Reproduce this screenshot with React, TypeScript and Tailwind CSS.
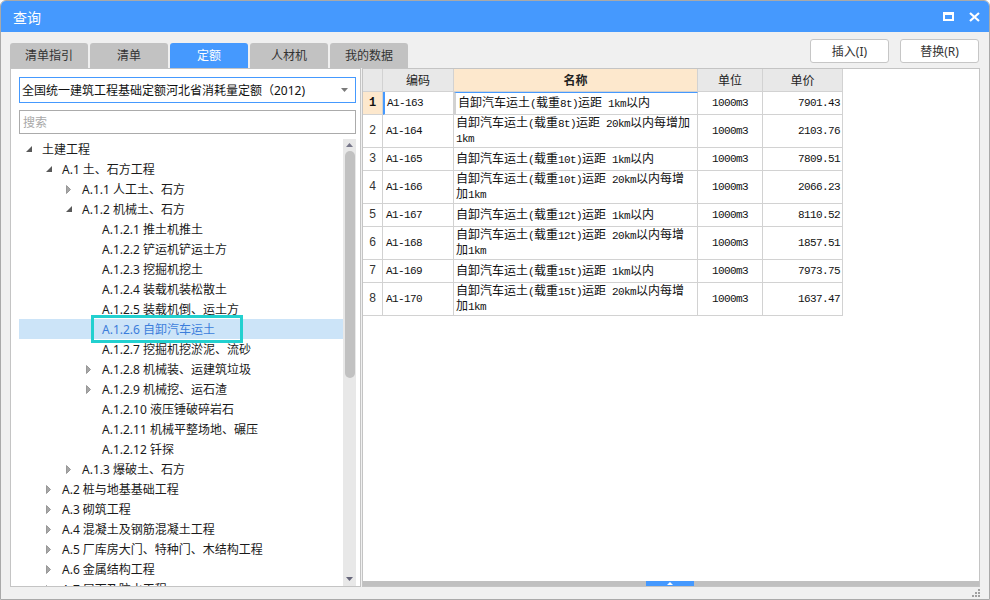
import React from "react";

type Node = { lvl: number; label: string; icon: "open" | "closed" | null; selected?: boolean };

const tree: Node[] = [
  { lvl: 0, label: "土建工程", icon: "open" },
  { lvl: 1, label: "A.1 土、石方工程", icon: "open" },
  { lvl: 2, label: "A.1.1 人工土、石方", icon: "closed" },
  { lvl: 2, label: "A.1.2 机械土、石方", icon: "open" },
  { lvl: 3, label: "A.1.2.1 推土机推土", icon: null },
  { lvl: 3, label: "A.1.2.2 铲运机铲运土方", icon: null },
  { lvl: 3, label: "A.1.2.3 挖掘机挖土", icon: null },
  { lvl: 3, label: "A.1.2.4 装载机装松散土", icon: null },
  { lvl: 3, label: "A.1.2.5 装载机倒、运土方", icon: null },
  { lvl: 3, label: "A.1.2.6 自卸汽车运土", icon: null, selected: true },
  { lvl: 3, label: "A.1.2.7 挖掘机挖淤泥、流砂", icon: null },
  { lvl: 3, label: "A.1.2.8 机械装、运建筑垃圾", icon: "closed" },
  { lvl: 3, label: "A.1.2.9 机械挖、运石渣", icon: "closed" },
  { lvl: 3, label: "A.1.2.10 液压锤破碎岩石", icon: null },
  { lvl: 3, label: "A.1.2.11 机械平整场地、碾压", icon: null },
  { lvl: 3, label: "A.1.2.12 钎探", icon: null },
  { lvl: 2, label: "A.1.3 爆破土、石方", icon: "closed" },
  { lvl: 1, label: "A.2 桩与地基基础工程", icon: "closed" },
  { lvl: 1, label: "A.3 砌筑工程", icon: "closed" },
  { lvl: 1, label: "A.4 混凝土及钢筋混凝土工程", icon: "closed" },
  { lvl: 1, label: "A.5 厂库房大门、特种门、木结构工程", icon: "closed" },
  { lvl: 1, label: "A.6 金属结构工程", icon: "closed" },
  { lvl: 1, label: "A.7 屋面及防水工程", icon: "closed" },
];

// indentation per tree level
const indent = ["pl-[5px]", "pl-[25px]", "pl-[45px]", "pl-[65px]"];

const rows = [
  { code: "A1-163", name: ["自卸汽车运土(载重8t)运距 1km以内"], price: "7901.43" },
  { code: "A1-164", name: ["自卸汽车运土(载重8t)运距 20km以内每增加", "1km"], price: "2103.76" },
  { code: "A1-165", name: ["自卸汽车运土(载重10t)运距 1km以内"], price: "7809.51" },
  { code: "A1-166", name: ["自卸汽车运土(载重10t)运距 20km以内每增", "加1km"], price: "2066.23" },
  { code: "A1-167", name: ["自卸汽车运土(载重12t)运距 1km以内"], price: "8110.52" },
  { code: "A1-168", name: ["自卸汽车运土(载重12t)运距 20km以内每增", "加1km"], price: "1857.51" },
  { code: "A1-169", name: ["自卸汽车运土(载重15t)运距 1km以内"], price: "7973.75" },
  { code: "A1-170", name: ["自卸汽车运土(载重15t)运距 20km以内每增", "加1km"], price: "1637.47" },
];

const tabs = ["清单指引", "清单", "定额", "人材机", "我的数据"];

// SimSun-like: ascii runs squeezed to a 6px advance, CJK at 12px
function Mixed({ text }: { text: string }) {
  const parts = text.match(/[\x00-\x7f]+|[^\x00-\x7f]+/g) || [];
  return (
    <>
      {parts.map((p, i) =>
        /^[\x00-\x7f]/.test(p) ? (
          <span key={i} className="font-['Liberation_Mono',monospace] text-[11px] tracking-[-0.6px]">
            {p}
          </span>
        ) : (
          <span key={i}>{p}</span>
        )
      )}
    </>
  );
}

function Arrow({ kind }: { kind: "open" | "closed" | null }) {
  if (kind === "open")
    return (
      <svg width="6" height="6" viewBox="0 0 6 6">
        <polygon points="6,0 6,6 0,6" fill="#595959" />
      </svg>
    );
  if (kind === "closed")
    return (
      <svg width="5" height="9" viewBox="0 0 5 9">
        <polygon points="0.5,0.5 4.5,4.5 0.5,8.5" fill="#a6a6a6" stroke="#8a8a8a" strokeWidth="0.8" />
      </svg>
    );
  return null;
}

export default function App() {
  return (
    <div className="w-[990px] h-[600px] flex flex-col bg-[#f0f0f0] border border-[#a9a9a9] rounded-t-[6px] overflow-hidden font-['Noto_Sans','Noto_Sans_CJK_SC',sans-serif] text-[#222]">
      {/* Title bar */}
      <div className="h-[31px] shrink-0 bg-[#4599fe] flex items-center justify-between pl-[12px] pr-[9px]">
        <span className="text-white text-[14px] pt-[1px]">查询</span>
        <div className="flex items-center gap-[15px]">
          <svg width="11" height="9" viewBox="0 0 11 9">
            <rect x="1" y="1" width="9" height="7" fill="none" stroke="#fff" strokeWidth="2" />
            <rect x="0" y="0" width="11" height="3" fill="#fff" />
          </svg>
          <svg width="11" height="10" viewBox="0 0 11 10">
            <path d="M1 1 L10 9 M10 1 L1 9" stroke="#fff" strokeWidth="2.2" />
          </svg>
        </div>
      </div>

      <div className="flex-1 flex flex-col px-[9px]">
        {/* Tabs + buttons */}
        <div className="h-[36px] shrink-0 flex justify-between">
          <div className="flex items-end gap-[2px]">
            {tabs.map((t) => (
              <div
                key={t}
                className={
                  t === "定额"
                    ? "w-[78px] h-[25px] pt-[1px] rounded-t-[3px] bg-[#4599fe] text-white text-[12px] flex items-center justify-center"
                    : "w-[78px] h-[25px] pt-[1px] rounded-t-[3px] bg-[#c2c2c2] text-[#333] text-[12px] flex items-center justify-center"
                }
              >
                {t}
              </div>
            ))}
          </div>
          <div className="flex gap-[11px] pt-[7px] mr-[1px]">
            <button className="w-[79px] h-[24px] pt-[1px] bg-white border border-[#c6c6c6] rounded-[3px] text-[12px] text-[#333]">插入(I)</button>
            <button className="w-[79px] h-[24px] pt-[1px] bg-white border border-[#c6c6c6] rounded-[3px] text-[12px] text-[#333]">替换(R)</button>
          </div>
        </div>

        {/* Panels */}
        <div className="h-[519px] shrink-0 flex gap-[1px]">
          {/* Left panel */}
          <div className="w-[351px] bg-white border border-[#c4c4c4] flex flex-col pt-[8px] pl-[8px] pr-[4px]">
            <div className="h-[26px] shrink-0 border border-[#4599fe] flex items-center justify-between pl-[2px] pr-[7px]">
              <span className="text-[12px] text-[#111] pt-[1px]">全国统一建筑工程基础定额河北省消耗量定额（2012)</span>
              <svg width="7" height="4" viewBox="0 0 7 4">
                <polygon points="0,0 7,0 3.5,4" fill="#7a7a7a" />
              </svg>
            </div>
            <div className="h-[24px] mt-[7px] shrink-0 border border-[#ababab] flex items-center pl-[3px] pt-[2px]">
              <span className="text-[12px] text-[#a8a8a8]">搜索</span>
            </div>
            <div className="flex-1 min-h-0 mt-[5px] flex">
              <div className="flex-1 overflow-hidden">
                {tree.map((n) => (
                  <div
                    key={n.label}
                    className={`relative h-[20px] flex items-center ${indent[n.lvl]} ${n.selected ? "bg-[#cce4f8]" : ""}`}
                  >
                    <div className="w-[18px] h-[20px] flex items-center pl-[2px]">
                      <Arrow kind={n.icon} />
                    </div>
                    <span className={`text-[12px] pt-[2px] whitespace-nowrap ${n.selected ? "text-[#3b7ddb]" : "text-[#1a1a1a]"}`}>{n.label}</span>
                    {n.selected && (
                      <div className="absolute left-[72px] top-[-4px] w-[152px] h-[28px] border-[3px] border-[#22d0cf]" />
                    )}
                  </div>
                ))}
              </div>
              <div className="w-[13px] bg-[#e8e8e8] flex flex-col items-center">
                <svg className="mt-[4px]" width="7" height="4" viewBox="0 0 7 4">
                  <polygon points="3.5,0 7,4 0,4" fill="#77778a" />
                </svg>
                <div className="w-[10px] h-[227px] mt-[4px] rounded-full bg-[#c1c1c1]" />
                <div className="flex-1" />
                <svg className="mb-[5px]" width="7" height="4" viewBox="0 0 7 4">
                  <polygon points="0,0 7,0 3.5,4" fill="#66667a" />
                </svg>
              </div>
            </div>
          </div>

          {/* Right panel */}
          <div className="flex-1 bg-white border border-[#c4c4c4] flex flex-col">
            <div className="grid grid-cols-[20px_71px_244px_65px_80px] w-[480px] text-[12px]">
              <div className="h-[23px] bg-[#e8e8e8] border-r border-b border-[#d2d2d2]" />
              <div className="h-[23px] pt-[1px] bg-[#e8e8e8] border-r border-b border-[#d2d2d2] flex items-center justify-center">编码</div>
              <div className="h-[23px] pt-[1px] bg-[#fde8cd] border-r border-b border-[#d2d2d2] flex items-center justify-center font-bold">名称</div>
              <div className="h-[23px] pt-[1px] bg-[#e8e8e8] border-r border-b border-[#d2d2d2] flex items-center justify-center">单位</div>
              <div className="h-[23px] pt-[1px] bg-[#e8e8e8] border-r border-b border-[#d2d2d2] flex items-center justify-center">单价</div>

              {rows.map((r, i) => {
                const h = r.name.length > 1 ? "h-[33px]" : "h-[23px]";
                const first = i === 0;
                return (
                  <React.Fragment key={r.code}>
                    <div
                      className={`${h} border-r border-b border-[#d2d2d2] flex items-center justify-center font-['Liberation_Mono',monospace] text-[12px] ${
                        first ? "bg-[#fde8cd] font-bold text-[#111]" : "text-[#333]"
                      }`}
                    >
                      {i + 1}
                    </div>
                    <div
                      className={`${h} border-r border-b border-[#d2d2d2] flex items-center pl-[2px] text-[#111] ${
                        first ? "border-l-2 border-l-[#4599fe]" : "pl-[3px]"
                      }`}
                    >
                      <Mixed text={r.code} />
                    </div>
                    <div
                      className={`${h} border-r border-b border-[#d2d2d2] flex flex-col justify-center pl-[2px] leading-[14px] text-[#111] ${
                        first ? "border-2 border-[#6a6a6a] border-t-[#4599fe] border-t-[1px]" : ""
                      }`}
                    >
                      {r.name.map((l) => (
                        <div key={l} className="whitespace-nowrap">
                          <Mixed text={l} />
                        </div>
                      ))}
                    </div>
                    <div className={`${h} border-r border-b border-[#d2d2d2] flex items-center justify-center text-[#111]`}>
                      <Mixed text="1000m3" />
                    </div>
                    <div className={`${h} border-r border-b border-[#d2d2d2] flex items-center justify-end pr-[2px] text-[#111]`}>
                      <Mixed text={r.price} />
                    </div>
                  </React.Fragment>
                );
              })}
            </div>
            <div className="flex-1" />
            <div className="h-[5px] bg-[#c0c0c0] flex">
              <div className="ml-[283px] w-[48px] h-[5px] bg-[#4599fe] flex items-center justify-center">
                <svg width="6" height="3" viewBox="0 0 6 3">
                  <polygon points="3,0 6,3 0,3" fill="#fff" />
                </svg>
              </div>
            </div>
          </div>
        </div>

        {/* Bottom strip with resize grip */}
        <div className="flex-1 flex justify-end items-end pb-[2px]">
          <svg width="8" height="8" viewBox="0 0 8 8">
            <rect x="6" y="0" width="2" height="2" fill="#a0a0a0" />
            <rect x="3" y="3" width="2" height="2" fill="#a0a0a0" />
            <rect x="6" y="3" width="2" height="2" fill="#a0a0a0" />
            <rect x="0" y="6" width="2" height="2" fill="#a0a0a0" />
            <rect x="3" y="6" width="2" height="2" fill="#a0a0a0" />
            <rect x="6" y="6" width="2" height="2" fill="#a0a0a0" />
          </svg>
        </div>
      </div>
    </div>
  );
}
